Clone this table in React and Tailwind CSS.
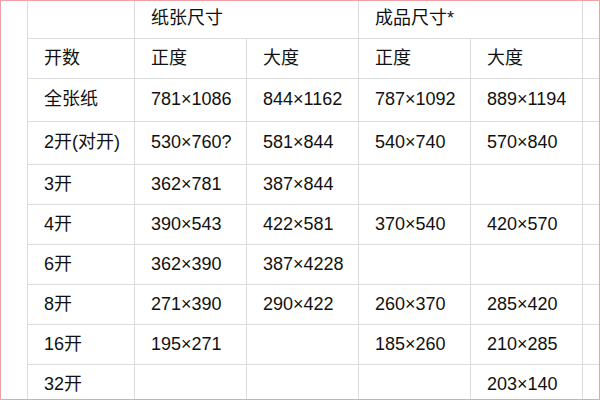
const rows = [
  { name: "全张纸", cells: ["781×1086", "844×1162", "787×1092", "889×1194", ""], h: "h-[43px]" },
  { name: "2开(对开)", cells: ["530×760?", "581×844", "540×740", "570×840", "780×"], h: "h-[43px]" },
  { name: "3开", cells: ["362×781", "387×844", "", "", ""], h: "h-[40px]" },
  { name: "4开", cells: ["390×543", "422×581", "370×540", "420×570", "540×"], h: "h-[40px]" },
  { name: "6开", cells: ["362×390", "387×4228", "", "", ""], h: "h-[40px]" },
  { name: "8开", cells: ["271×390", "290×422", "260×370", "285×420", "390×"], h: "h-[40px]" },
  { name: "16开", cells: ["195×271", "", "185×260", "210×285", "270×"], h: "h-[40px]" },
  { name: "32开", cells: ["", "", "", "203×140", "195×"], h: "h-[40px]" },
];

const cell = "border border-[#dcdcdc] pl-4 text-left align-middle font-normal whitespace-nowrap";

export default function App() {
  return (
    <div
      className="w-[600px] h-[400px] overflow-hidden border border-[#eda3a7] bg-white pl-[26px] text-[18px] text-[#111]"
      style={{ fontFamily: '"Liberation Sans", "Noto Sans CJK SC", sans-serif' }}
    >
      <table className="table-fixed border-collapse w-[667px] -mt-px">
        <colgroup>
          <col className="w-[107px]" />
          <col className="w-[112px]" />
          <col className="w-[112px]" />
          <col className="w-[112px]" />
          <col className="w-[112px]" />
          <col className="w-[112px]" />
        </colgroup>
        <thead>
          <tr className="h-[38px]">
            <th className={cell + " border-t-0"}></th>
            <th colSpan={2} className={cell + " border-t-0"}>纸张尺寸</th>
            <th colSpan={2} className={cell + " border-t-0"}>成品尺寸*</th>
            <th className={cell + " border-t-0"}>备注</th>
          </tr>
          <tr className="h-[40px]">
            <th className={cell}>开数</th>
            <th className={cell}>正度</th>
            <th className={cell}>大度</th>
            <th className={cell}>正度</th>
            <th className={cell}>大度</th>
            <th className={cell}></th>
          </tr>
        </thead>
        <tbody>
          {rows.map((r) => (
            <tr key={r.name} className={r.h}>
              <td className={cell}>{r.name}</td>
              {r.cells.map((c, i) => (
                <td key={i} className={cell}>{c}</td>
              ))}
            </tr>
          ))}
        </tbody>
      </table>
    </div>
  );
}
